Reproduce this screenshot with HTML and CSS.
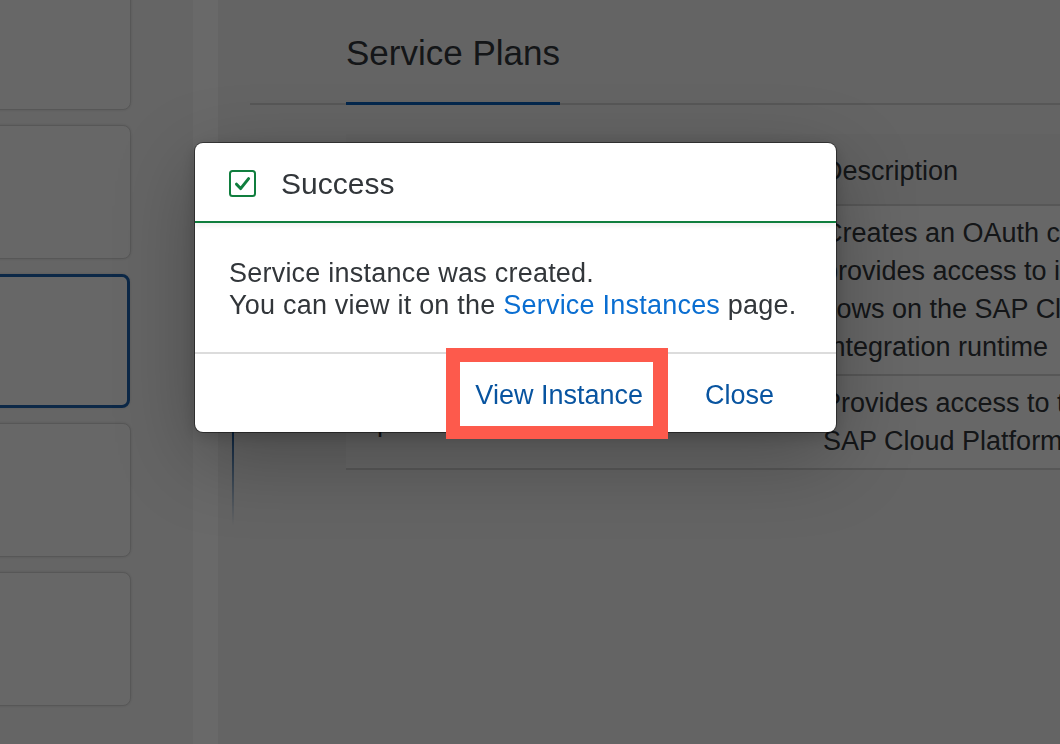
FILE: index.html
```html
<!DOCTYPE html>
<html lang="en">
<head>
<meta charset="utf-8">
<title>Service Plans – Success</title>
<link rel="stylesheet" href="styles.css">
</head>
<body>
<div class="page">
  <aside class="sidebar">
    <div class="card"></div>
    <div class="card"></div>
    <div class="card selected"></div>
    <div class="card"></div>
    <div class="card"></div>
  </aside>
  <div class="strip"></div>
  <main class="main">
    <div class="rail"><div class="rail-line"></div></div>
    <div class="content">
      <div class="tabs">
        <div class="tab active">Service Plans</div>
      </div>
      <table class="plans">
        <thead>
          <tr><th class="col-name">Plan</th><th class="col-desc">Description</th></tr>
        </thead>
        <tbody>
          <tr>
            <td class="col-name">integration-flow</td>
            <td class="col-desc">Creates an OAuth client that<br>provides access to integration<br>flows on the SAP Cloud Platform<br>Integration runtime</td>
          </tr>
          <tr>
            <td class="col-name">api</td>
            <td class="col-desc">Provides access to the<br>SAP Cloud Platform APIs</td>
          </tr>
        </tbody>
      </table>
    </div>
  </main>
</div>

<div class="overlay"></div>

<div class="dialog" role="dialog" aria-labelledby="dlg-title">
  <header class="dialog-header">
    <svg class="success-icon" width="27" height="27" viewBox="0 0 27 27" aria-hidden="true">
      <rect x="1" y="1" width="25" height="25" rx="2.5" fill="none" stroke="#107e3e" stroke-width="2"/>
      <path d="M7.5 14.2 L11.6 18.6 L19.6 8.6" fill="none" stroke="#107e3e" stroke-width="3" stroke-linecap="round" stroke-linejoin="round"/>
    </svg>
    <h1 id="dlg-title" class="dialog-title">Success</h1>
  </header>
  <div class="dialog-body">
    <p class="message">Service instance was created.<br>You can view it on the <a class="link" href="#">Service Instances</a> page.</p>
  </div>
  <footer class="dialog-footer">
    <button class="btn">View Instance</button>
    <button class="btn">Close</button>
  </footer>
  <div class="highlight"></div>
</div>
</body>
</html>
```

FILE: styles.css
```css
* { box-sizing: border-box; }

html, body {
  margin: 0;
  padding: 0;
}

body {
  width: 1060px;
  height: 744px;
  overflow: hidden;
  font-family: "Liberation Sans", Arial, sans-serif;
  color: #32363a;
  background: #f2f2f2;
}

.page {
  display: flex;
  height: 744px;
  overflow: hidden;
}

/* ---------- left list of cards ---------- */
.sidebar {
  width: 193px;
  flex: none;
  background: #f5f5f5;
  display: flex;
  flex-direction: column;
  gap: 15px;
  margin-top: -24px;
  padding-right: 62px;
}

.card {
  flex: none;
  height: 134px;
  margin-left: -14px;
  background: #fbfbfb;
  border: 1px solid #d4d4d4;
  border-radius: 8px;
  box-shadow: 0 0 3px rgba(0, 0, 0, 0.12);
}

.card.selected {
  border: 3px solid #1d63ad;
  margin-right: 1px;
}

.strip {
  width: 25px;
  flex: none;
  background: #ffffff;
}

/* ---------- main area ---------- */
.main {
  flex: 1;
  display: flex;
  min-width: 0;
  background: #f2f2f2;
}

.rail {
  width: 32px;
  flex: none;
  padding-left: 14px;
}

.rail-line {
  width: 2px;
  height: 225px;
  margin-top: 300px;
  background: linear-gradient(#0a4f99 0%, #0a4f99 55%, rgba(10, 79, 153, 0) 100%);
}

.content {
  flex: 1;
  min-width: 0;
}

.tabs {
  display: flex;
  border-bottom: 2px solid #d4d4d4;
}

.tab {
  margin-left: 96px;
  padding: 33px 0 29px;
  font-size: 35px;
  line-height: 40px;
  color: #32363a;
}

.tab.active {
  border-bottom: 3px solid #0a5fb8;
  margin-bottom: -2px;
}

/* ---------- table ---------- */
.plans {
  margin: 29px 0 0 96px;
  width: 820px;
  border-collapse: collapse;
  table-layout: fixed;
  font-size: 27px;
  line-height: 38px;
  color: #32363a;
}

.plans th {
  height: 71px;
  padding: 3px 16px 0;
  font-weight: normal;
  text-align: left;
  vertical-align: middle;
  background: #eeeeee;
  border-bottom: 2px solid #d4d4d4;
}

.plans td {
  padding: 8px 16px 8px;
  vertical-align: middle;
  white-space: nowrap;
  background: #fafafa;
  border-bottom: 2px solid #d4d4d4;
}

.plans .col-name { width: 461px; }

/* ---------- overlay + dialog ---------- */
.overlay {
  position: fixed;
  inset: 0;
  background: rgba(0, 0, 0, 0.59);
}

.dialog {
  position: absolute;
  left: 195px;
  top: 143px;
  width: 641px;
  background: #ffffff;
  border-radius: 8px;
  box-shadow: 0 0 0 1px rgba(0, 0, 0, 0.45), 0 24px 80px rgba(0, 0, 0, 0.28), 0 4px 16px rgba(0, 0, 0, 0.18);
}

.dialog-header {
  height: 80px;
  display: flex;
  align-items: center;
  gap: 25px;
  padding: 3px 34px 0;
  border-bottom: 2px solid #107e3e;
  box-shadow: 0 3px 5px rgba(0, 0, 0, 0.06);
}

.success-icon {
  flex: none;
  display: block;
}

.dialog-title {
  margin: 0;
  font-size: 30px;
  font-weight: normal;
  line-height: 36px;
  color: #32363a;
}

.dialog-body {
  padding: 34px 34px 31px;
}

.message {
  margin: 0;
  font-size: 27px;
  line-height: 32px;
  letter-spacing: 0.22px;
  color: #32363a;
}

.link {
  color: #0a6ed1;
  text-decoration: none;
}

.dialog-footer {
  height: 80px;
  display: flex;
  justify-content: flex-end;
  align-items: center;
  padding: 4px 31px 0 0;
  border-top: 2px solid #dcdcdc;
}

.btn {
  font-family: inherit;
  font-size: 27px;
  line-height: 36px;
  color: #0854a0;
  background: transparent;
  border: 0;
  padding: 0 31px;
  margin: 0;
  cursor: pointer;
}

.highlight {
  position: absolute;
  left: 251px;
  top: 205px;
  width: 222px;
  height: 91px;
  border: 14px solid #fd5a4c;
  border-bottom-width: 13px;
  border-right-width: 15px;
  pointer-events: none;
}
```
